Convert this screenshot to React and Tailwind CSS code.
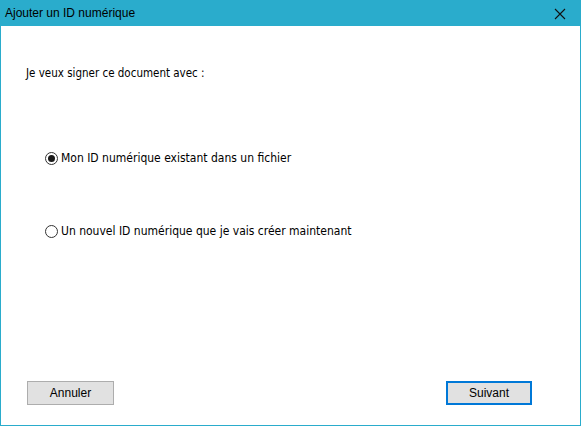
import React, { useState } from "react";

const Radio = ({ checked, label, onClick }) => (
  <button type="button" onClick={onClick} className="flex items-center gap-[3px] text-left text-[12px]">
    <span className="flex h-[13px] w-[13px] items-center justify-center rounded-full border border-[#333333] bg-white">
      {checked && <span className="h-[7px] w-[7px] rounded-full bg-[#1a1a1a]" />}
    </span>
    <span>{label}</span>
  </button>
);

export default function App() {
  const [choice, setChoice] = useState("file");

  return (
    <div
      className="flex h-[426px] w-[581px] flex-col border border-t-0 border-[#2aaccc] bg-white text-[11.5px] text-black"
      style={{ fontFamily: '"DejaVu Sans Condensed", "Liberation Sans", Arial, sans-serif' }}
    >
      {/* barre de titre */}
      <div className="flex h-[26px] items-center justify-between bg-[#2aaccc] pl-[4px] pr-[14px] font-['Liberation_Sans']">
        <span className="text-[12px]">Ajouter un ID numérique</span>
        <svg width="12" height="12" viewBox="0 0 12 12" className="mt-[1px]">
          <path d="M1 1L11 11M11 1L1 11" stroke="#111" strokeWidth="1.1" />
        </svg>
      </div>

      <div className="flex flex-1 flex-col px-[25px]">
        <p className="mt-[39px]">Je veux signer ce document avec :</p>

        <div className="mt-[67px] flex flex-col gap-[55px] pl-[19px]">
          <Radio
            checked={choice === "file"}
            label="Mon ID numérique existant dans un fichier"
            onClick={() => setChoice("file")}
          />
          <Radio
            checked={choice === "new"}
            label="Un nouvel ID numérique que je vais créer maintenant"
            onClick={() => setChoice("new")}
          />
        </div>

        <div className="mt-auto mb-[20px] flex items-center justify-between pl-[1px] pr-[23px] font-['Liberation_Sans'] text-[12px]">
          <button className="h-[24px] w-[87px] border border-[#adadad] bg-[#e1e1e1]">Annuler</button>
          <button className="h-[24px] w-[86px] border-2 border-[#0078d7] bg-[#e1e1e1]">Suivant</button>
        </div>
      </div>
    </div>
  );
}
